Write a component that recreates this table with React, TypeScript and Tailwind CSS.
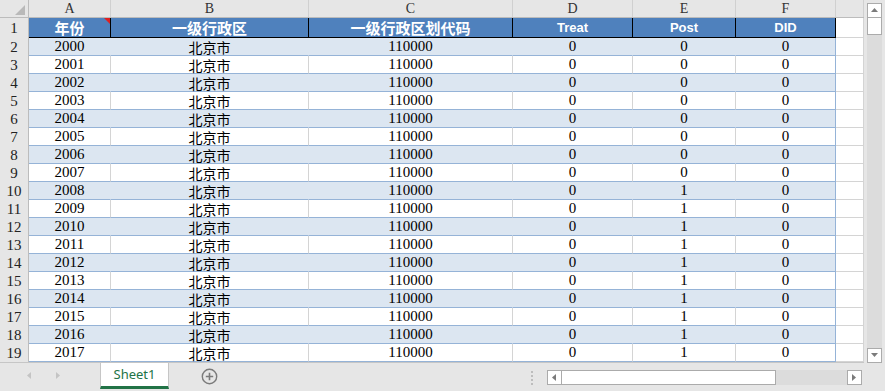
const COLS = [
  { key: "A", w: "w-[82px]" },
  { key: "B", w: "w-[198px]" },
  { key: "C", w: "w-[204px]" },
  { key: "D", w: "w-[120px]" },
  { key: "E", w: "w-[103px]" },
  { key: "F", w: "w-[100px]" },
];

const HEAD = ["年份", "一级行政区", "一级行政区划代码", "Treat", "Post", "DID"];

const rows = Array.from({ length: 18 }, (_, i) => ({
  n: i + 2,
  vals: [String(2000 + i), "北京市", "110000", "0", i >= 8 ? "1" : "0", "0"],
  band: i % 2 === 0,
}));

const serif = "font-['Liberation_Serif','Noto_Sans_CJK_SC',serif]";
const cjk = "font-['Noto_Sans_CJK_SC',sans-serif]";

function RowHead({ n }: { n: number }) {
  return (
    <div
      className={`h-full w-[29px] shrink-0 flex items-center justify-center bg-[#e6e6e6] border-r border-[#bcbcbc] text-[15px] leading-none text-[#222] ${serif}`}
    >
      {n}
    </div>
  );
}

function Arrow({ dir }: { dir: "up" | "down" | "left" | "right" }) {
  const pts = {
    up: "1,6 4.5,2 8,6",
    down: "1,2 4.5,6 8,2",
    left: "6,1 2,4.5 6,8",
    right: "2,1 6,4.5 2,8",
  }[dir];
  return (
    <svg width="9" height="9" viewBox="0 0 9 9">
      <polygon points={pts} fill="#7b7b7b" />
    </svg>
  );
}

function VScroll() {
  return (
    <div className="w-[21px] h-[363px] bg-[#e6e6e6] flex flex-col px-[3px] pt-[3px]">
      <div className="h-[15px] bg-white border border-[#ababab] flex items-center justify-center">
        <Arrow dir="up" />
      </div>
      <div className="flex-1 bg-[#dcdcdc] flex flex-col">
        <div className="h-[17px] bg-white border-x border-b border-[#ababab]" />
      </div>
      <div className="h-[15px] bg-white border border-[#ababab] flex items-center justify-center">
        <Arrow dir="down" />
      </div>
    </div>
  );
}

function Grid() {
  return (
    <div className="w-[864px] h-[363px] bg-white border-b border-[#c6c6c6] flex flex-col">
      {/* column letters */}
      <div className="flex h-[18px] border-b border-[#bcbcbc] bg-[#e6e6e6]">
        <div className="w-[29px] h-full border-r border-[#bcbcbc] flex items-end justify-end pr-[3px] pb-[2px]">
          <svg width="10" height="10" viewBox="0 0 10 10">
            <polygon points="10,0 10,10 0,10" fill="#b9b9b9" />
          </svg>
        </div>
        {COLS.map((c) => (
          <div
            key={c.key}
            className={`${c.w} h-full border-r border-[#d0d0d0] flex items-center justify-center text-[14px] leading-none text-[#333] ${serif}`}
          >
            {c.key}
          </div>
        ))}
        <div className="w-[28px] h-full border-r border-[#d0d0d0]" />
      </div>

      {/* header row 1 */}
      <div className="flex h-[20px]">
        <RowHead n={1} />
        {COLS.map((c, i) => (
          <div
            key={c.key}
            className={`${c.w} relative h-full bg-[#4f81bd] border-r border-b border-black flex items-center justify-center leading-none text-white font-bold ${
              i >= 3
                ? "text-[13px] font-['Liberation_Sans',sans-serif]"
                : `text-[15px] ${cjk}`
            }`}
          >
            {HEAD[i]}
            {i === 0 && (
              <svg className="absolute top-0 right-0" width="6" height="6" viewBox="0 0 6 6">
                <polygon points="0,0 6,0 6,6" fill="#e02020" />
              </svg>
            )}
          </div>
        ))}
        <div className="w-[28px] h-full border-r border-b border-[#d4d4d4]" />
      </div>

      {/* data rows */}
      {rows.map((r) => (
        <div key={r.n} className="flex h-[18px]">
          <RowHead n={r.n} />
          {COLS.map((c, i) => {
            const last = i === COLS.length - 1;
            const edge = last
              ? "border-[#95b3d7]"
              : r.band
                ? "border-r-[#dce6f1] border-b-[#95b3d7]"
                : "border-r-[#d4d4d4] border-b-[#95b3d7]";
            return (
              <div
                key={c.key}
                className={`${c.w} h-full border-r border-b ${edge} ${
                  r.band ? "bg-[#dce6f1]" : "bg-white"
                } flex items-center justify-center leading-none text-black ${
                  i === 1 ? `text-[14px] ${cjk}` : `text-[15px] ${serif}`
                }`}
              >
                {r.vals[i]}
              </div>
            );
          })}
          <div className="w-[28px] h-full border-r border-b border-[#d4d4d4]" />
        </div>
      ))}
    </div>
  );
}

function TabBar() {
  return (
    <div className="h-[28px] flex items-start bg-[#e6e6e6]">
      <div className="w-[100px] h-[25px] flex items-center pl-[25px] gap-[20px]">
        <svg width="9" height="9" viewBox="0 0 9 9">
          <polygon points="6,1 2,4.5 6,8" fill="#c4c4c4" />
        </svg>
        <svg width="9" height="9" viewBox="0 0 9 9">
          <polygon points="2,1 6,4.5 2,8" fill="#c4c4c4" />
        </svg>
      </div>
      <div className="w-[69px] h-[26px] bg-white border-x border-[#c6c6c6] border-b-[3px] border-b-[#217346] flex items-center justify-center text-[13px] leading-none text-[#217346] font-['Noto_Sans',sans-serif]">
        Sheet1
      </div>
      <div className="ml-[32px] mt-[5px]">
        <svg width="17" height="17" viewBox="0 0 17 17">
          <circle cx="8.5" cy="8.5" r="7.2" fill="none" stroke="#7a7a7a" strokeWidth="1.4" />
          <path d="M8.5 4.8v7.4M4.8 8.5h7.4" stroke="#7a7a7a" strokeWidth="1.6" />
        </svg>
      </div>
      <div className="ml-[313px] mt-[8px] flex flex-col gap-[2px]">
        <div className="w-[2px] h-[2px] bg-[#bdbdbd]" />
        <div className="w-[2px] h-[2px] bg-[#bdbdbd]" />
        <div className="w-[2px] h-[2px] bg-[#bdbdbd]" />
        <div className="w-[2px] h-[2px] bg-[#bdbdbd]" />
      </div>
      <div className="ml-[14px] mt-[7px] w-[315px] h-[15px] flex">
        <div className="w-[15px] h-full bg-white border border-[#ababab] flex items-center justify-center">
          <Arrow dir="left" />
        </div>
        <div className="w-[214px] h-full bg-white border-y border-r border-[#ababab]" />
        <div className="flex-1 h-full bg-[#dcdcdc]" />
        <div className="w-[15px] h-full bg-white border border-[#ababab] flex items-center justify-center">
          <Arrow dir="right" />
        </div>
      </div>
    </div>
  );
}

export default function App() {
  return (
    <div className="w-[885px] h-[391px] overflow-hidden bg-[#e6e6e6] flex flex-col">
      <div className="flex">
        <Grid />
        <VScroll />
      </div>
      <TabBar />
    </div>
  );
}
